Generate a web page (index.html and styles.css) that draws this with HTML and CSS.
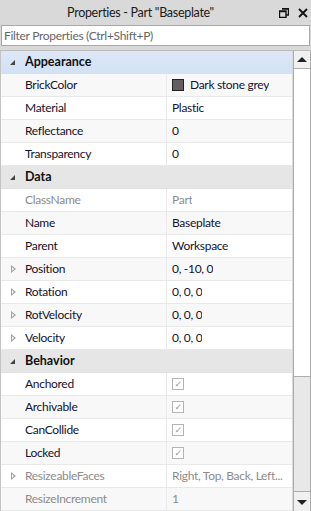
FILE: index.html
```html
<!DOCTYPE html>
<html>
<head>
    <title>Properties</title>
    <link rel="stylesheet" href="styles.css">
</head>
<body>
    <div class="panel">
        <!-- Title bar -->
        <div class="titlebar">
            <span class="title">Properties - Part "Baseplate"</span>
            <span class="title-icons">
                <svg width="10" height="10" viewBox="0 0 10 10"><path d="M3 0.5h6.5v6.5h-2.5M0.5 3h6.5v6.5h-6.5z M0.5 3.5h6.5 M3 1h6.5" fill="none" stroke="#111" stroke-width="1.4"/></svg>
                <svg width="10" height="10" viewBox="0 0 10 10"><path d="M1 1l8 8M9 1l-8 8" stroke="#111" stroke-width="1.8"/></svg>
            </span>
        </div>

        <!-- Filter -->
        <div class="filter">Filter Properties (Ctrl+Shift+P)</div>

        <div class="grid-wrap">
            <div class="grid">
                <div class="row group selected"><span class="exp"><i class="open"></i></span><span class="label">Appearance</span></div>
                <div class="row"><span class="exp"></span><span class="label">BrickColor</span><span class="value"><b class="swatch"></b>Dark stone grey</span></div>
                <div class="row"><span class="exp"></span><span class="label">Material</span><span class="value">Plastic</span></div>
                <div class="row"><span class="exp"></span><span class="label">Reflectance</span><span class="value">0</span></div>
                <div class="row"><span class="exp"></span><span class="label">Transparency</span><span class="value">0</span></div>

                <div class="row group"><span class="exp"><i class="open"></i></span><span class="label">Data</span></div>
                <div class="row dim"><span class="exp"></span><span class="label">ClassName</span><span class="value">Part</span></div>
                <div class="row"><span class="exp"></span><span class="label">Name</span><span class="value">Baseplate</span></div>
                <div class="row"><span class="exp"></span><span class="label">Parent</span><span class="value">Workspace</span></div>
                <div class="row"><span class="exp"><i class="closed"></i></span><span class="label">Position</span><span class="value">0, -10, 0</span></div>
                <div class="row"><span class="exp"><i class="closed"></i></span><span class="label">Rotation</span><span class="value">0, 0, 0</span></div>
                <div class="row"><span class="exp"><i class="closed"></i></span><span class="label">RotVelocity</span><span class="value">0, 0, 0</span></div>
                <div class="row"><span class="exp"><i class="closed"></i></span><span class="label">Velocity</span><span class="value">0, 0, 0</span></div>

                <div class="row group"><span class="exp"><i class="open"></i></span><span class="label">Behavior</span></div>
                <div class="row"><span class="exp"></span><span class="label">Anchored</span><span class="value"><b class="check">&#10003;</b></span></div>
                <div class="row"><span class="exp"></span><span class="label">Archivable</span><span class="value"><b class="check">&#10003;</b></span></div>
                <div class="row"><span class="exp"></span><span class="label">CanCollide</span><span class="value"><b class="check">&#10003;</b></span></div>
                <div class="row"><span class="exp"></span><span class="label">Locked</span><span class="value"><b class="check">&#10003;</b></span></div>
                <div class="row dim"><span class="exp"><i class="closed"></i></span><span class="label">ResizeableFaces</span><span class="value">Right, Top, Back, Left...</span></div>
                <div class="row dim"><span class="exp"></span><span class="label">ResizeIncrement</span><span class="value">1</span></div>
            </div>

            <!-- Scrollbar -->
            <div class="scrollbar">
                <div class="sb-btn"><i class="up"></i></div>
                <div class="sb-thumb"></div>
                <div class="sb-track"></div>
                <div class="sb-btn"><i class="down"></i></div>
            </div>
        </div>
    </div>
</body>
</html>
```

FILE: styles.css
```css
/* General */
body {
    margin: 0;
    background-color: #d9d9d9;
    font-family: Lato, "Open Sans", sans-serif;
    font-size: 12px;
    letter-spacing: -0.3px;
    color: #16122b;
}

.panel {
    width: 311px;
    height: 511px;
    overflow: hidden;
}

/* Title bar */
.titlebar {
    height: 25px;
    display: flex;
    align-items: center;
    justify-content: center;
    padding-right: 30px;
    position: relative;
}

.title {
    color: #1a1a1a;
    font-size: 12.5px;
}

.title-icons {
    position: absolute;
    right: 3px;
    top: 8px;
    display: flex;
    gap: 9px;
}

/* Filter box */
.filter {
    margin: 0 1px;
    height: 19px;
    line-height: 19px;
    background-color: #ffffff;
    border: 1px solid #a8a8a8;
    padding-left: 2px;
    color: #666666;
}

/* Grid */
.grid-wrap {
    margin-top: 4px;
    display: flex;
    border-top: 1px solid #bdbdbd;
}

.grid {
    width: 291px;
    background-color: #ffffff;
    border-left: 1px solid #c4c4c4;
}

.row {
    display: flex;
    height: 22px;
    line-height: 22px;
    border-bottom: 1px solid #e9e9e9;
    background-color: #ffffff;
}

.row:nth-child(even) {
    background-color: #f8f8f8;
}

.exp {
    width: 24px;
    flex: none;
    position: relative;
}

.label {
    width: 141px;
    flex: none;
    border-right: 1px solid #e9e9e9;
    white-space: nowrap;
    overflow: hidden;
}

.value {
    padding-left: 5px;
    display: flex;
    align-items: center;
    white-space: nowrap;
    overflow: hidden;
}

.group {
    background-color: #e6e6e6 !important;
    border-bottom: 1px solid #e0e0e0;
}

.group .label {
    font-weight: bold;
    font-size: 12.5px;
    letter-spacing: 0;
    border-right: none;
    color: #111;
}

.selected {
    background: linear-gradient(#dde8f7, #d2e1f5) !important;
}

.dim {
    color: #8c8c8c;
}

/* Expander glyphs */
.exp i.open {
    position: absolute;
    left: 9px;
    top: 9px;
    width: 0;
    height: 0;
    border-left: 5px solid transparent;
    border-bottom: 5px solid #444;
}

.exp i.closed {
    position: absolute;
    left: 10px;
    top: 7px;
    width: 0;
    height: 0;
    border-top: 4px solid transparent;
    border-bottom: 4px solid transparent;
    border-left: 5px solid #a0a0a0;
}

.exp i.closed::after {
    content: "";
    position: absolute;
    left: -4px;
    top: -2px;
    border-top: 2px solid transparent;
    border-bottom: 2px solid transparent;
    border-left: 2px solid #ffffff;
}

/* Value widgets */
.swatch {
    width: 10px;
    height: 10px;
    background-color: #635f62;
    border: 1px solid #222;
    margin-right: 6px;
}

.check {
    width: 10px;
    height: 10px;
    border: 1px solid #b4b4b4;
    font-size: 9px;
    line-height: 10px;
    text-align: center;
    color: #9a9a9a;
    font-weight: normal;
    font-family: "DejaVu Sans", sans-serif;
    background-color: #fff;
}

/* Scrollbar */
.scrollbar {
    width: 16px;
    margin-left: 1px;
    display: flex;
    flex-direction: column;
    border-left: 1px solid #adadad;
    border-right: 1px solid #adadad;
    height: 460px;
    background-color: #e8e8e8;
}

.sb-btn {
    height: 17px;
    flex: none;
    position: relative;
    background-color: #f0f0f0;
    border-bottom: 1px solid #adadad;
}

.sb-btn:last-child {
    border-top: 1px solid #adadad;
    border-bottom: none;
    height: 19px;
}

.sb-thumb {
    height: 307px;
    flex: none;
    background-color: #ffffff;
    border-bottom: 1px solid #adadad;
}

.sb-track {
    flex: 1;
}

.sb-btn i {
    position: absolute;
    left: 3px;
    width: 0;
    height: 0;
    border-left: 5px solid transparent;
    border-right: 5px solid transparent;
}

.sb-btn i.up {
    top: 6px;
    border-bottom: 5px solid #222;
}

.sb-btn i.down {
    top: 8px;
    border-top: 5px solid #222;
}
```
